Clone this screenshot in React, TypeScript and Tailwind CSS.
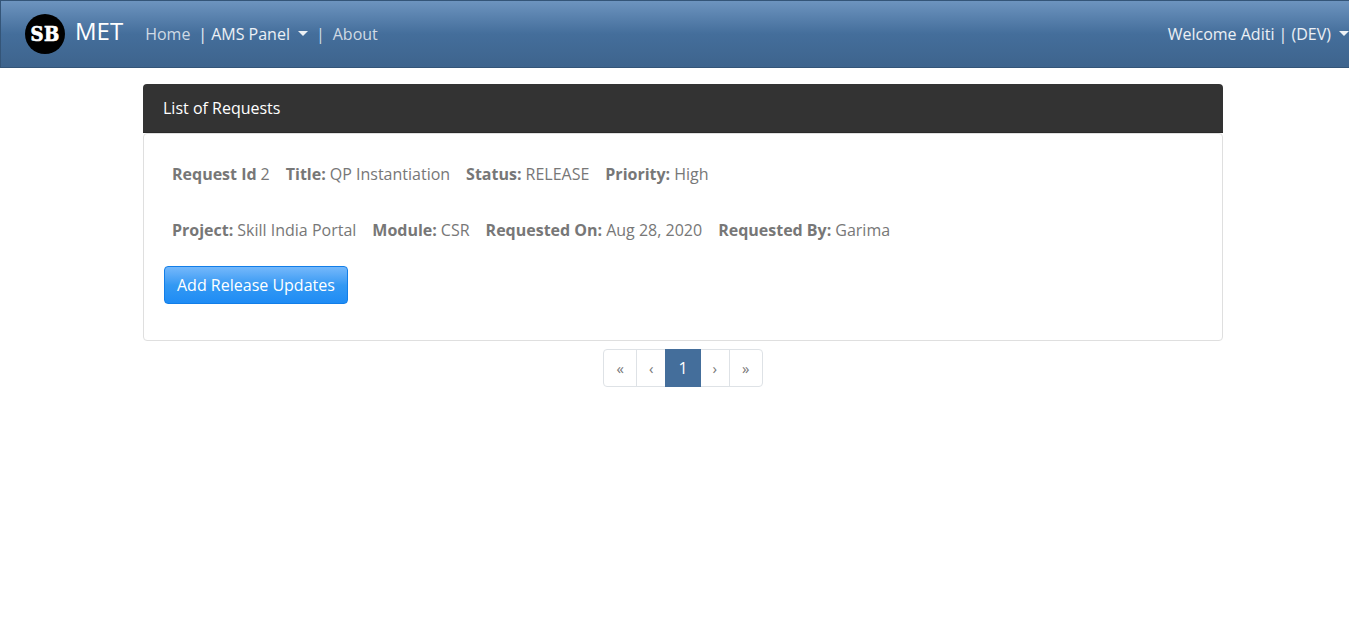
import React from 'react';

function Caret() {
  return <span className="ml-2 inline-block border-x-5 border-t-5 border-x-transparent border-t-current align-[4px]" />;
}

function Field({ label, value }: { label: string; value: string }) {
  return (
    <div className="flex gap-1">
      <dt className="font-bold">{label}</dt>
      <dd>{value}</dd>
    </div>
  );
}

const pageLink = 'flex h-[38px] items-center border border-[#dee2e6] px-3 text-[15px] text-[#777777]';

export default function App() {
  return (
    <div className="font-['Open_Sans',sans-serif] text-base text-[#777777]">
      <nav className="flex h-[68px] items-center border border-r-0 border-[#345578] bg-linear-to-b from-[#6d94bf] from-0% via-[#446e9b] via-50% to-[#3e648d] to-100% pl-6 text-white/90">
        <a href="#" className="flex items-center gap-[10px] text-white">
          <svg viewBox="0 0 40 40" className="h-10 w-10" role="img" aria-label="SB">
            <circle cx="20" cy="20" r="20" fill="#000" />
            <g fill="#fff" stroke="#fff" strokeWidth="0.7" fontFamily="DejaVu Serif Condensed, DejaVu Serif" fontWeight="bold" fontSize="20" textAnchor="middle">
              <text x="12" y="27">S</text>
              <text x="26.5" y="27">B</text>
            </g>
          </svg>
          <span className="pb-1.5 text-2xl">MET</span>
        </a>
        <div className="ml-[22px] flex items-center">
          <a href="#" className="text-white/75">Home</a>
          <span className="ml-2">|</span>
          <button type="button" className="ml-1">AMS Panel<Caret /></button>
          <span className="ml-2 text-white/75">|</span>
          <a href="#" className="ml-2 text-white/75">About</a>
        </div>
        <button type="button" className="ml-auto whitespace-nowrap">Welcome Aditi | (DEV)<Caret /></button>
      </nav>
      <main className="mt-4 mr-[126px] ml-[143px]">
        <section>
          <h1 className="rounded-t border-b border-[#292929] bg-[#333333] px-5 py-3 text-white">List of Requests</h1>
          <div className="rounded border border-[#dfdfdf] px-5 pt-5 pb-9">
            <dl className="flex flex-wrap gap-4 p-2">
              <Field label="Request Id" value="2" />
              <Field label="Title:" value="QP Instantiation" />
              <Field label="Status:" value="RELEASE" />
              <Field label="Priority:" value="High" />
            </dl>
            <dl className="mt-4 flex flex-wrap gap-4 p-2">
              <Field label="Project:" value="Skill India Portal" />
              <Field label="Module:" value="CSR" />
              <Field label="Requested On:" value="Aug 28, 2020" />
              <Field label="Requested By:" value="Garima" />
            </dl>
            <button type="button" className="mt-4 h-[38px] rounded border border-[#127ee8] bg-linear-to-b from-[#74b8fb] from-0% via-[#3399f3] via-50% to-[#1e8cf5] to-100% px-3 text-white">Add Release Updates</button>
          </div>
        </section>
        <nav aria-label="Pagination" className="mt-2 flex justify-center">
          <a href="#" className={`${pageLink} rounded-l`}>«</a>
          <a href="#" className={`${pageLink} -ml-px`}>‹</a>
          <a href="#" className="-ml-px flex h-[38px] items-center bg-[#446e9b] px-[13px] font-medium text-white">1</a>
          <a href="#" className={`${pageLink} border-l-0`}>›</a>
          <a href="#" className={`${pageLink} -ml-px rounded-r`}>»</a>
        </nav>
      </main>
    </div>
  );
}
